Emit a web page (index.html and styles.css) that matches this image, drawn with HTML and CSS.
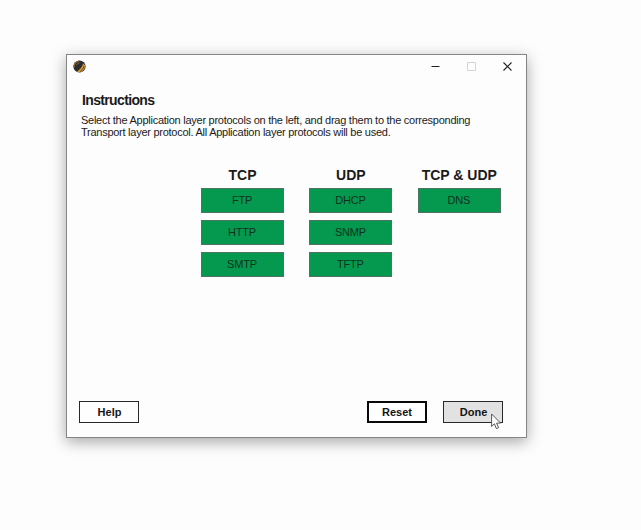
FILE: index.html
```html
<!DOCTYPE html>
<html lang="en">
<head>
<meta charset="utf-8">
<title>Protocols</title>
<link rel="stylesheet" href="styles.css">
</head>
<body>
<main class="window">
  <header class="titlebar">
    <svg class="app-icon" width="13" height="13" viewBox="0 0 13 13"><circle cx="6.5" cy="6.5" r="6.1" fill="#2b2b30"/><path d="M1 7.5Q.8 2.5 6 1" fill="none" stroke="#94651f" stroke-width="1.3"/><path d="M3.8 11.6Q8.6 9 10.2 3.6L12.2 5.6Q11.8 10.8 7.2 12.4Z" fill="#d79a34"/><path d="M3.2 5.3Q4.5 3 6.6 2.8" stroke="#666970" fill="none"/><path d="M7 11.6Q10.4 9.4 11.2 6" fill="none" stroke="#4c3921" stroke-width=".8"/></svg>
    <div class="controls">
      <svg width="9" height="9" viewBox="0 0 9 9"><path d="M.5 4.5h8" stroke="#222"/></svg>
      <svg width="9" height="9" viewBox="0 0 9 9"><path d="M.5 .5h8v8h-8z" fill="none" stroke="#d4d4d4"/></svg>
      <svg width="9" height="9" viewBox="0 0 9 9"><path d="M.5 .5l8 8m0-8l-8 8" stroke="#222" stroke-width="1.1"/></svg>
    </div>
  </header>
  <section class="intro">
    <h1>Instructions</h1>
    <p>Select the Application layer protocols on the left, and drag them to the corresponding<br>Transport layer protocol. All Application layer protocols will be used.</p>
  </section>
  <section class="groups">
    <div class="group"><h2>TCP</h2><div class="tile">FTP</div><div class="tile">HTTP</div><div class="tile">SMTP</div></div>
    <div class="group"><h2>UDP</h2><div class="tile">DHCP</div><div class="tile">SNMP</div><div class="tile">TFTP</div></div>
    <div class="group"><h2>TCP &amp; UDP</h2><div class="tile">DNS</div></div>
  </section>
  <footer class="actions">
    <button class="btn help">Help</button>
    <button class="btn reset">Reset</button>
    <button class="btn done">Done</button>
  </footer>
  <svg class="cursor" width="11" height="17" viewBox="0 0 11 17"><path d="M.6 1v12.4l2.8-2.6 2 4.8 2.2-.9-2-4.6h4z" fill="#fff" stroke="#444" stroke-width=".9"/></svg>
</main>
</body>
</html>
```

FILE: styles.css
```css
* { box-sizing: border-box; }
body {
  margin: 0;
  height: 530px;
  padding: 54px 0 0 66px;
  overflow: hidden;
  background: #fdfdfd;
  color: #1b1b1b;
  font-family: "Liberation Sans", Arial, sans-serif;
}
h1, h2, p { margin: 0; }
.window {
  position: relative;
  display: flex;
  flex-direction: column;
  width: 461px;
  height: 384px;
  border: 1px solid #858585;
  background: #fdfdfd;
  box-shadow: 0 4px 14px rgba(0, 0, 0, .34);
}
.titlebar {
  display: flex;
  justify-content: space-between;
  align-items: center;
  height: 23px;
  padding: 0 14px 0 6px;
}
.controls { display: flex; gap: 27px; }
.controls svg, .app-icon { display: block; }
.intro { padding: 14px 0 0 14px; height: 90px; }
h1 {
  padding-left: 1px;
  font-size: 14px;
  letter-spacing: -.65px;
  line-height: 16px;
}
.intro p {
  margin-top: 6px;
  font-size: 11px;
  letter-spacing: -.26px;
  line-height: 12px;
  white-space: nowrap;
}
.groups {
  display: flex;
  align-items: flex-start;
  gap: 25.4px;
  padding-left: 134px;
}
.group { display: flex; flex-direction: column; gap: 7px; width: 83px; }
h2 {
  height: 13px;
  font-size: 14px;
  line-height: 14px;
  text-align: center;
  white-space: nowrap;
}
.tile {
  height: 25px;
  padding-right: 1px;
  border: 1px solid #4f7562;
  background: #04994f;
  color: #12301c;
  font-size: 11px;
  letter-spacing: -.2px;
  line-height: 23px;
  text-align: center;
}
.actions {
  display: flex;
  margin-top: auto;
  padding: 0 23px 14px 12px;
}
.btn {
  width: 60px;
  height: 22px;
  padding: 0;
  border: 1px solid #292929;
  border-radius: 0;
  background: #fefefe;
  color: #151515;
  font: bold 11px/20px "Liberation Sans", Arial, sans-serif;
}
.help { padding-left: 1px; }
.reset { margin-left: auto; border: 2px solid #080808; line-height: 18px; }
.done { margin-left: 16px; padding-left: 1px; background: #e2e2e2; }
.cursor { position: absolute; left: 424px; top: 358px; }
```
